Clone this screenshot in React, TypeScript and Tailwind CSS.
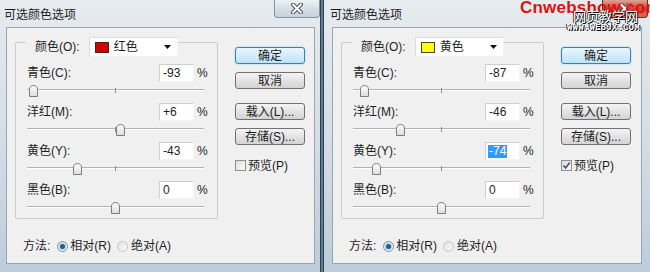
import React from "react";

type RowData = { label: string; value: number; text: string; selected?: boolean };

type DialogProps = {
  first: boolean;
  swatch: "red" | "yellow";
  colorName: string;
  rows: RowData[];
  preview: boolean;
  active: boolean;
};

function Slider({ value }: { value: number }) {
  const pos = ((value + 100) / 200) * 177;
  return (
    <div className="relative w-[177px] h-[21px] ml-[11px]">
      <div className="absolute left-0 right-0 top-[7px] h-px bg-[#b2b2b2]" />
      <div className="absolute left-0 right-0 top-[8px] h-px bg-white" />
      <div className="absolute left-[88px] top-[6px] w-px h-[5px] bg-[#8c8c8c]" />
      <svg
        className="absolute top-[3px]"
        style={{ left: pos - 4.5 }}
        width="9"
        height="12"
        viewBox="0 0 9 12"
      >
        <defs>
          <linearGradient id="thumbg" x1="0" y1="0" x2="0" y2="1">
            <stop offset="0" stopColor="#ffffff" />
            <stop offset="1" stopColor="#dcdcdc" />
          </linearGradient>
        </defs>
        <path
          d="M0.5 11.5 V4.2 C0.5 2 2.2 0.5 4.5 0.5 C6.8 0.5 8.5 2 8.5 4.2 V11.5 Z"
          fill="url(#thumbg)"
          stroke="#7c7c7c"
        />
      </svg>
    </div>
  );
}

function Btn({ children, primary }: { children: React.ReactNode; primary?: boolean }) {
  return (
    <div
      className={
        primary
          ? "w-[70px] h-[17px] rounded-[3px] border border-[#3c7fb1] bg-linear-to-b from-[#eaf6fd] to-[#bde3f6] shadow-[0_0_2px_#7fd0f5] flex items-center justify-center text-[12px] leading-none text-[#1b1b1b]"
          : "w-[70px] h-[17px] rounded-[3px] border border-[#707070] bg-linear-to-b from-[#f4f4f4] to-[#d3d3d3] flex items-center justify-center text-[12px] leading-none text-[#1b1b1b]"
      }
    >
      {children}
    </div>
  );
}

function Radio({ checked }: { checked?: boolean }) {
  return (
    <div
      className={
        checked
          ? "w-[11px] h-[11px] rounded-full border border-[#7d8e9c] bg-linear-to-br from-[#dfe9f1] to-[#ffffff] flex items-center justify-center"
          : "w-[11px] h-[11px] rounded-full border border-[#c4c4c4] bg-linear-to-br from-[#e2e2e2] to-[#fafafa] flex items-center justify-center"
      }
    >
      {checked && <div className="w-[5px] h-[5px] rounded-full bg-[#23608f] shadow-[0_0_1px_1px_#9fd2f1]" />}
    </div>
  );
}

function CloseBtn({ active }: { active: boolean }) {
  return (
    <div
      className={
        active
          ? "w-[46px] h-[18px] rounded-b-[4px] border border-t-0 border-[#6b2a24] bg-linear-to-b from-[#e0a194] via-[#c7473a] to-[#d2724a] flex items-center justify-center"
          : "w-[46px] h-[18px] rounded-b-[4px] border border-t-0 border-[#8593a0] bg-linear-to-b from-[#eef2f5] via-[#d6dee5] to-[#c9d3dc] flex items-center justify-center"
      }
    >
      <svg width="12" height="11" viewBox="0 0 12 11">
        <path d="M2 1.5 L10 9.5 M10 1.5 L2 9.5" stroke="#4b5866" strokeWidth="4" strokeLinecap="round" />
        <path d="M2 1.5 L10 9.5 M10 1.5 L2 9.5" stroke="#ffffff" strokeWidth="2" strokeLinecap="round" />
      </svg>
    </div>
  );
}

function Dialog({ first, swatch, colorName, rows, preview, active }: DialogProps) {
  return (
    <div
      className={
        first
          ? "w-[321px] h-[272px] shrink-0 flex flex-col border-r border-[#2f3e46] bg-linear-to-b from-[#e6ebef] via-[#d5dee6] to-[#bcccda]"
          : "w-[327px] h-[272px] shrink-0 flex flex-col border-l border-[#2f3e46] bg-linear-to-b from-[#e6ebef] via-[#d5dee6] to-[#bcccda]"
      }
    >
      <div className={first ? "h-[27px] flex justify-between items-start pl-[4px]" : "h-[27px] flex justify-between items-start pl-[6px] pr-[2px]"}>
        <div className="pt-[8px] text-[12px] leading-[14px] text-[#1e1e1e]">可选颜色选项</div>
        <CloseBtn active={active} />
      </div>
      <div className={first ? "flex pl-[6px]" : "flex pl-[8px]"}>
        <div
          className={
            first
              ? "w-[309px] h-[237px] bg-[#f0f0f0] border border-[#9aa7b3] flex"
              : "w-[310px] h-[237px] bg-[#f0f0f0] border border-[#9aa7b3] flex"
          }
        >
          <div className="ml-[8px] flex flex-col">
            <div className="mt-[14px] w-[203px] h-[177px] border border-[#c6ccd2] rounded-[2px] flex flex-col">
              <div className="-mt-[6px] ml-[10px] pl-[9px] pr-0 bg-[#f0f0f0] self-start flex items-center h-[20px]">
                <span className="text-[12px] leading-none text-[#1e1e1e]">颜色(O):</span>
                <div className="ml-[9px] w-[89px] h-[20px] bg-white border border-t-[#dcdcdc] border-l-[#dcdcdc] border-r-[#f3f3f3] border-b-[#f3f3f3] flex items-center">
                  <div
                    className={
                      swatch === "red"
                        ? "ml-[5px] w-[14px] h-[11px] bg-[#d40000] border border-[#5a1a1a]"
                        : "ml-[5px] w-[14px] h-[11px] bg-[#ffff00] border border-[#4d4d1a]"
                    }
                  />
                  <span className="ml-[5px] text-[12px] leading-none text-[#1e1e1e]">{colorName}</span>
                  <svg className="ml-auto mr-[6px]" width="7" height="4" viewBox="0 0 7 4">
                    <path d="M0 0 H7 L3.5 4 Z" fill="#111" />
                  </svg>
                </div>
              </div>
              <div className="mt-[7px] flex flex-col">
                {rows.map((r) => (
                  <div key={r.label} className="flex flex-col h-[39px]">
                    <div className="flex items-center h-[18px]">
                      <span className="ml-[11px] w-[132px] text-[12px] leading-none text-[#1e1e1e]">{r.label}</span>
                      <div className="w-[35px] h-[18px] bg-white border border-t-[#cfcfcf] border-l-[#cfcfcf] border-r-[#f4f4f4] border-b-[#f4f4f4] pl-[2px] flex items-center">
                        {r.selected ? (
                          <span className="bg-[#3399ff] text-white text-[12px] leading-[13px] px-px">{r.text}</span>
                        ) : (
                          <span className="text-[12px] leading-none text-[#1e1e1e] pl-px">{r.text}</span>
                        )}
                      </div>
                      <span className="ml-[3px] text-[12px] leading-none text-[#1e1e1e]">%</span>
                    </div>
                    <Slider value={r.value} />
                  </div>
                ))}
              </div>
            </div>
            <div className="mt-[19px] h-[16px] pl-[8px] flex items-center text-[12px] leading-none text-[#1e1e1e]">
              <span>方法:</span>
              <div className="ml-[7px]">
                <Radio checked />
              </div>
              <span className="ml-[2px]">相对(R)</span>
              <div className="ml-[6px]">
                <Radio />
              </div>
              <span className="ml-[3px]">绝对(A)</span>
            </div>
          </div>
          <div className="ml-[17px] mt-[19px] flex flex-col">
            <Btn primary>确定</Btn>
            <div className="mt-[8px]">
              <Btn>取消</Btn>
            </div>
            <div className="mt-[14px]">
              <Btn>载入(L)...</Btn>
            </div>
            <div className="mt-[8px]">
              <Btn>存储(S)...</Btn>
            </div>
            <div className="mt-[14px] flex items-center h-[13px]">
              <div className="w-[11px] h-[11px] border border-[#8f8f8f] bg-linear-to-br from-[#dedede] to-[#fbfbfb] flex items-center justify-center">
                {preview && (
                  <svg width="9" height="9" viewBox="0 0 9 9">
                    <path d="M1.5 4.5 L3.6 7 L7.8 1.5" fill="none" stroke="#3d5470" strokeWidth="1.6" />
                  </svg>
                )}
              </div>
              <span className="ml-[2px] text-[12px] leading-none text-[#1e1e1e]">预览(P)</span>
            </div>
          </div>
        </div>
      </div>
    </div>
  );
}

export default function App() {
  return (
    <div className="relative w-[650px] h-[272px] overflow-hidden bg-[#5d7f99] flex font-['Liberation_Sans','Noto_Sans_CJK_SC',sans-serif]">
      <Dialog
        first
        swatch="red"
        colorName="红色"
        preview={false}
        active={false}
        rows={[
          { label: "青色(C):", value: -93, text: "-93" },
          { label: "洋红(M):", value: 6, text: "+6" },
          { label: "黄色(Y):", value: -43, text: "-43" },
          { label: "黑色(B):", value: 0, text: "0" },
        ]}
      />
      <div className="w-[2px] shrink-0" />
      <Dialog
        first={false}
        swatch="yellow"
        colorName="黄色"
        preview
        active
        rows={[
          { label: "青色(C):", value: -87, text: "-87" },
          { label: "洋红(M):", value: -46, text: "-46" },
          { label: "黄色(Y):", value: -74, text: "-74", selected: true },
          { label: "黑色(B):", value: 0, text: "0" },
        ]}
      />
      <div className="absolute left-[520px] top-[-2px] text-[17px] font-bold text-[#e01010] leading-[20px] tracking-[0.2px] whitespace-nowrap font-['Liberation_Sans',sans-serif]">
        Cnwebshow.com
      </div>
      <div className="absolute left-[573px] top-[9px] text-[13px] leading-[14px] text-white whitespace-nowrap font-['Noto_Sans_CJK_SC',sans-serif] [text-shadow:1px_1px_0_#000,-1px_0_0_#222]">
        网页教学网
      </div>
      <div className="absolute left-[567px] top-[23px] text-[9px] leading-[10px] font-bold text-white whitespace-nowrap tracking-[0.2px] font-['Liberation_Mono',monospace] [text-shadow:1px_1px_0_#000,-1px_0_0_#222]">
        WWW.WEBJX.COM
      </div>
    </div>
  );
}
